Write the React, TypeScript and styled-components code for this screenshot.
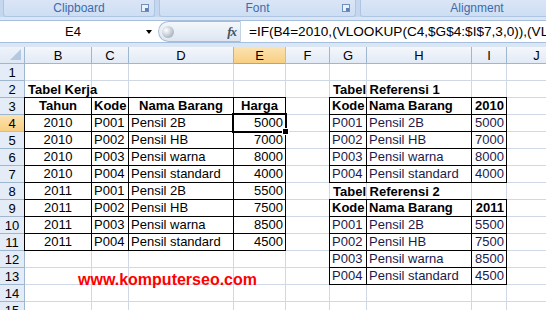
import { Fragment } from "react"
import styled, { createGlobalStyle, css } from "styled-components"

const COLS = ["B", "C", "D", "E", "F", "G", "H", "I", "J"]
const ROWS = Array.from({ length: 15 }, (_, i) => i + 1)

const work = [
  ["2010", "P001", "Pensil 2B", "5000"],
  ["2010", "P002", "Pensil HB", "7000"],
  ["2010", "P003", "Pensil warna", "8000"],
  ["2010", "P004", "Pensil standard", "4000"],
  ["2011", "P001", "Pensil 2B", "5500"],
  ["2011", "P002", "Pensil HB", "7500"],
  ["2011", "P003", "Pensil warna", "8500"],
  ["2011", "P004", "Pensil standard", "4500"],
]

const ref1 = [
  ["P001", "Pensil 2B", "5000"],
  ["P002", "Pensil HB", "7000"],
  ["P003", "Pensil warna", "8000"],
  ["P004", "Pensil standard", "4000"],
]

const ref2 = [
  ["P001", "Pensil 2B", "5500"],
  ["P002", "Pensil HB", "7500"],
  ["P003", "Pensil warna", "8500"],
  ["P004", "Pensil standard", "4500"],
]

export default function App() {
  return (
    <>
      <GlobalStyle />
      <SWindow>
        <SRibbon>
          <SGroup $w={150}>
            Clipboard
            <SLauncher />
          </SGroup>
          <SGroup $w={195}>
            Font
            <SLauncher />
          </SGroup>
          <SGroup $w={232}>Alignment</SGroup>
        </SRibbon>

        <SFormulaBar>
          <SNameBox>
            <SNameText>E4</SNameText>
            <SArrow />
          </SNameBox>
          <SFxPill>
            <SKnob />
            <SFx>fx</SFx>
          </SFxPill>
          <SFormula>=IF(B4=2010,(VLOOKUP(C4,$G$4:$I$7,3,0)),(VLOOKUP(C4,$G$10:$I$13,3,0)))</SFormula>
        </SFormulaBar>

        <SSheet>
          <SCorner />
          {COLS.map((c, i) => (
            <SColHead key={c} $c={i + 2} $selected={c === "E"}>
              {c}
            </SColHead>
          ))}
          {ROWS.map((r) => (
            <Fragment key={r}>
              <SRowHead $r={r + 1} $selected={r === 4}>
                {r}
              </SRowHead>
              {COLS.map((c, i) => (
                <SGridCell key={c} $c={i + 2} $r={r + 1} />
              ))}
            </Fragment>
          ))}

          <STitle $col="2 / 5" $row={3}>Tabel Kerja</STitle>
          <STable $col="2 / 6" $row="4 / 13" $template="67px 37px 105px 52px">
            <SCell $bold $align="center">Tahun</SCell>
            <SCell $bold $align="center">Kode</SCell>
            <SCell $bold $align="center">Nama Barang</SCell>
            <SCell $bold $align="center">Harga</SCell>
            {work.map((row, ri) => (
              <Fragment key={ri}>
                <SCell $align="center">{row[0]}</SCell>
                <SCell>{row[1]}</SCell>
                <SCell>{row[2]}</SCell>
                <SCell $align="right">
                  {row[3]}
                  {ri === 0 && (
                    <SSelection>
                      <SHandle />
                    </SSelection>
                  )}
                </SCell>
              </Fragment>
            ))}
          </STable>

          <STitle $col="7 / 10" $row={3}>Tabel Referensi 1</STitle>
          <STable $col="7 / 10" $row="4 / 9" $template="37px 105px 35px">
            <SCell $bold>Kode</SCell>
            <SCell $bold>Nama Barang</SCell>
            <SCell $bold $align="right">2010</SCell>
            {ref1.map((row) => (
              <Fragment key={row[0]}>
                <SCell $ink>{row[0]}</SCell>
                <SCell $ink>{row[1]}</SCell>
                <SCell $ink $align="right">{row[2]}</SCell>
              </Fragment>
            ))}
          </STable>

          <STitle $col="7 / 10" $row={9}>Tabel Referensi 2</STitle>
          <STable $col="7 / 10" $row="10 / 15" $template="37px 105px 35px">
            <SCell $bold>Kode</SCell>
            <SCell $bold>Nama Barang</SCell>
            <SCell $bold $align="right">2011</SCell>
            {ref2.map((row) => (
              <Fragment key={row[0]}>
                <SCell $ink>{row[0]}</SCell>
                <SCell $ink>{row[1]}</SCell>
                <SCell $ink $align="right">{row[2]}</SCell>
              </Fragment>
            ))}
          </STable>

          <SWatermark>www.komputerseo.com</SWatermark>
        </SSheet>
      </SWindow>
    </>
  )
}

const GlobalStyle = createGlobalStyle`
  html, body {
    margin: 0;
    padding: 0;
    overflow: hidden;
    background: #fff;
  }
  body {
    font-family: "Liberation Sans", Arial, sans-serif;
    font-size: 13px;
    color: #000;
  }
`

const SWindow = styled.div`
  width: 546px;
  height: 310px;
  overflow: hidden;
  background: #dbe6f4;
`

const SRibbon = styled.div`
  display: flex;
  gap: 4px;
  height: 17px;
  padding-left: 3px;
  background: #c4d7ee;
  overflow: hidden;
`

const SGroup = styled.div<{ $w: number }>`
  position: relative;
  flex: 0 0 ${(p) => p.$w}px;
  height: 16px;
  display: flex;
  align-items: center;
  justify-content: center;
  background: linear-gradient(#dae6f6, #cddef3);
  border: 1px solid #aec6e4;
  border-top: none;
  border-radius: 0 0 3px 3px;
  font-size: 12px;
  color: #3e6aaa;
`

const SLauncher = styled.span`
  position: absolute;
  right: 5px;
  top: 4px;
  width: 6px;
  height: 6px;
  border: 1px solid #6f8fbf;
  background: #eaf1fa;
  &::after {
    content: "";
    position: absolute;
    right: 0;
    bottom: 0;
    width: 3px;
    height: 3px;
    background: #5b7fb6;
  }
`

const SFormulaBar = styled.div`
  display: flex;
  align-items: stretch;
  height: 23px;
  margin-top: 3px;
  background: #fff;
  border-top: 1px solid #a7bfde;
  border-bottom: 1px solid #a7bfde;
  box-sizing: border-box;
`

const SNameBox = styled.div`
  flex: 0 0 158px;
  display: flex;
  align-items: center;
`

const SNameText = styled.span`
  flex: 1;
  text-align: center;
  font-size: 13px;
`

const SArrow = styled.span`
  width: 0;
  height: 0;
  margin-right: 6px;
  border-left: 3px solid transparent;
  border-right: 3px solid transparent;
  border-top: 4px solid #000;
`

const SFxPill = styled.div`
  flex: 0 0 83px;
  display: flex;
  align-items: center;
  justify-content: space-between;
  box-sizing: border-box;
  padding: 0 4px 0 3px;
  border: 1px solid #a7bcd8;
  border-right-color: #c5d3e6;
  border-radius: 11px 0 0 11px;
  background: linear-gradient(#f4f7fb, #dde6f1);
`

const SKnob = styled.span`
  width: 12px;
  height: 12px;
  border-radius: 50%;
  background: radial-gradient(circle at 35% 35%, #ffffff, #b9c2cc 60%, #8e98a4);
`

const SFx = styled.span`
  font-family: "Liberation Serif", "Times New Roman", serif;
  font-style: italic;
  font-weight: bold;
  font-size: 13px;
  color: #44505e;
  letter-spacing: -1px;
`

const SFormula = styled.div`
  flex: 1;
  padding-left: 8px;
  display: flex;
  align-items: center;
  white-space: nowrap;
  overflow: hidden;
  font-size: 13.6px;
`

const headBase = css`
  box-sizing: border-box;
  display: flex;
  align-items: center;
  justify-content: center;
  font-size: 13px;
  border-right: 1px solid #9eb6ce;
  border-bottom: 1px solid #9eb6ce;
`

const SSheet = styled.div`
  display: grid;
  grid-template-columns: 25px 67px 37px 105px 52px 44px 37px 105px 35px 60px;
  grid-template-rows: repeat(16, 17px);
  margin-top: 4px;
  background: #fff;
`

const SCorner = styled.div`
  ${headBase};
  grid-column: 1;
  grid-row: 1;
  background: linear-gradient(#eef3fa, #dfe8f5);
  position: relative;
  &::after {
    content: "";
    position: absolute;
    right: 3px;
    bottom: 3px;
    border-left: 11px solid transparent;
    border-bottom: 11px solid #b4c8e2;
  }
`

const SColHead = styled.div<{ $c: number; $selected?: boolean }>`
  ${headBase};
  grid-column: ${(p) => p.$c};
  grid-row: 1;
  background: ${(p) =>
    p.$selected ? "linear-gradient(#fbe3b2, #f8cf82)" : "linear-gradient(#f4f7fb, #e2eaf6)"};
  ${(p) => p.$selected && "border-bottom: 1px solid #f29536; border-right-color: #f2b46a;"}
`

const SRowHead = styled.div<{ $r: number; $selected?: boolean }>`
  ${headBase};
  grid-column: 1;
  grid-row: ${(p) => p.$r};
  background: ${(p) => (p.$selected ? "linear-gradient(#fbe3b2, #f8cf82)" : "#e4ecf7")};
  ${(p) => p.$selected && "border-right: 1px solid #f29536; border-bottom-color: #f2b46a;"}
`

const SGridCell = styled.div<{ $c: number; $r: number }>`
  grid-column: ${(p) => p.$c};
  grid-row: ${(p) => p.$r};
  box-sizing: border-box;
  border-right: 1px solid #d0d7e5;
  border-bottom: 1px solid #d0d7e5;
`

const STitle = styled.div<{ $col: string; $row: number }>`
  grid-column: ${(p) => p.$col};
  grid-row: ${(p) => p.$row};
  padding-left: 3px;
  font-weight: bold;
  font-size: 13px;
  line-height: 17px;
  white-space: nowrap;
`

const STable = styled.div<{ $col: string; $row: string; $template: string }>`
  grid-column: ${(p) => p.$col};
  grid-row: ${(p) => p.$row};
  margin: -1px 0 0 -1px;
  display: grid;
  grid-template-columns: ${(p) => p.$template};
  grid-auto-rows: 17px;
  background: #fff;
  border-top: 1px solid #000;
  border-left: 1px solid #000;
`

const SCell = styled.div<{ $align?: "left" | "center" | "right"; $bold?: boolean; $ink?: boolean }>`
  position: relative;
  box-sizing: border-box;
  padding: 0 2px;
  border-right: 1px solid #000;
  border-bottom: 1px solid #000;
  font-size: 13px;
  line-height: 16px;
  white-space: nowrap;
  text-align: ${(p) => p.$align ?? "left"};
  font-weight: ${(p) => (p.$bold ? "bold" : "normal")};
  color: ${(p) => (p.$ink ? "#1c1a4a" : "#000")};
`

const SSelection = styled.span`
  position: absolute;
  top: -2px;
  left: -2px;
  right: -2px;
  bottom: -2px;
  z-index: 2;
  border: 2px solid #000;
  box-shadow: inset 0 0 0 1px #fff;
  pointer-events: none;
`

const SHandle = styled.span`
  position: absolute;
  right: -4px;
  bottom: -4px;
  width: 5px;
  height: 5px;
  background: #000;
  border: 1px solid #fff;
`

const SWatermark = styled.div`
  grid-column: 2 / 7;
  grid-row: 14;
  padding-left: 53px;
  font-weight: bold;
  font-size: 16px;
  line-height: 17px;
  color: #ff0000;
  white-space: nowrap;
  transform: translateY(3px);
`
